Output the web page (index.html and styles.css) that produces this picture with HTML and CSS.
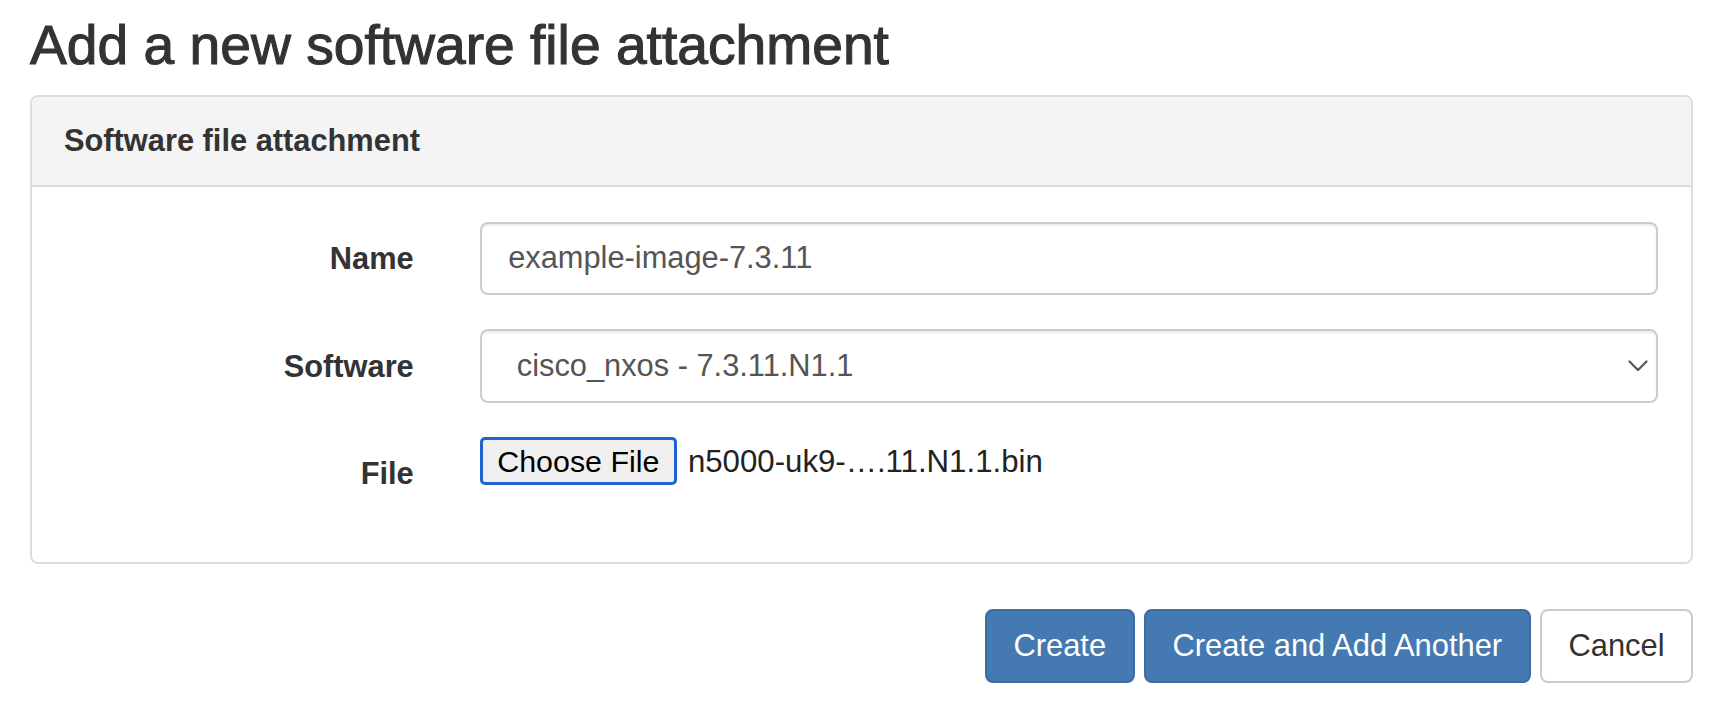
FILE: index.html
```html
<!DOCTYPE html>
<html lang="en">
<head>
<meta charset="utf-8">
<title>Add a new software file attachment</title>
<link rel="stylesheet" href="styles.css">
</head>
<body>
<main class="page">
  <h1 class="page-title">Add a new software file attachment</h1>
  <form class="form-horizontal">
    <section class="panel">
      <div class="panel-heading"><strong>Software file attachment</strong></div>
      <div class="panel-body">
        <div class="form-row">
          <label class="label-col" for="name">Name</label>
          <div class="field-col">
            <input class="form-control" id="name" type="text" value="example-image-7.3.11">
          </div>
        </div>
        <div class="form-row">
          <label class="label-col" for="software">Software</label>
          <div class="field-col">
            <div class="select-wrap">
              <select class="form-control select" id="software">
                <option>cisco_nxos - 7.3.11.N1.1</option>
              </select>
              <svg class="chevron" width="20" height="12" viewBox="0 0 20 12" aria-hidden="true">
                <path d="M1.5 1.5 L10 10 L18.5 1.5" fill="none" stroke="#555" stroke-width="2.2" stroke-linecap="round" stroke-linejoin="round"/>
              </svg>
            </div>
          </div>
        </div>
        <div class="form-row last">
          <label class="label-col" for="file">File</label>
          <div class="field-col">
            <div class="file-input">
              <button type="button" class="file-btn" id="file">Choose File</button>
              <span class="file-name">n5000-uk9-….11.N1.1.bin</span>
            </div>
          </div>
        </div>
      </div>
    </section>
    <div class="form-actions">
      <button type="button" class="btn btn-primary">Create</button>
      <button type="button" class="btn btn-primary">Create and Add Another</button>
      <button type="button" class="btn btn-default">Cancel</button>
    </div>
  </form>
</main>
</body>
</html>
```

FILE: styles.css
```css
* {
  box-sizing: border-box;
}

html, body {
  margin: 0;
  padding: 0;
  background: #fff;
}

body {
  font-family: "Liberation Sans", Arial, Helvetica, sans-serif;
  font-size: 30.8px;
  line-height: 44px;
  color: #333;
}

.page {
  padding: 0 25px 0 30px;
}

.page-title {
  margin: 14.7px 0 19.8px;
  font-size: 55.2px;
  line-height: 60.5px;
  font-weight: 400;
  color: #333;
  -webkit-text-stroke: 1.1px #333;
}

.panel {
  border: 2px solid #ddd;
  border-radius: 8px;
  background: #fff;
  overflow: hidden;
}

.panel-heading {
  background: #f4f4f4;
  border-bottom: 2px solid #ddd;
  padding: 22px 32px;
  font-weight: 700;
}

.panel-body {
  padding: 34.7px 33px 31.5px;
}

.form-row {
  display: flex;
  margin: 0 -33px 34.3px;
}

.label-col {
  flex: 0 0 25%;
  padding: 15.4px 33px 0;
  text-align: right;
  font-weight: 700;
  color: #333;
}

.field-col {
  flex: 0 0 75%;
  padding: 0 33px;
}

.form-control {
  display: block;
  width: 100%;
  height: 73.4px;
  padding: 13.2px 26.4px;
  font-family: inherit;
  font-size: 30.8px;
  line-height: 44px;
  color: #555;
  background: #fff;
  border: 2px solid #ccc;
  border-radius: 8px;
  box-shadow: inset 0 2px 2px rgba(0, 0, 0, 0.075);
  outline: none;
}

.select-wrap {
  position: relative;
}

.select {
  -webkit-appearance: none;
  appearance: none;
  padding: 0 64px 0 35px;
}

.chevron {
  position: absolute;
  right: 10px;
  top: 31px;
  pointer-events: none;
}

.file-input {
  display: flex;
  align-items: baseline;
}

.file-btn {
  height: 48px;
  padding: 0 14.5px;
  font-family: inherit;
  font-size: 30.4px;
  line-height: 42px;
  color: #000;
  background: #efefef;
  border: 3px solid #2062d0;
  border-radius: 5px;
}

.file-name {
  margin-left: 11px;
  font-size: 31.2px;
  color: #222;
}

.form-actions {
  display: flex;
  justify-content: flex-end;
  gap: 9.5px;
  margin-top: 45px;
}

.btn {
  height: 74px;
  padding: 13px 26.4px;
  font-family: inherit;
  font-size: 30.9px;
  line-height: 44px;
  border: 2px solid transparent;
  border-radius: 8px;
  cursor: pointer;
}

.btn-primary {
  color: #fff;
  background: #4579b1;
  border-color: #3d6ca0;
}

.btn-default {
  color: #333;
  background: #fff;
  border-color: #ccc;
}
```
